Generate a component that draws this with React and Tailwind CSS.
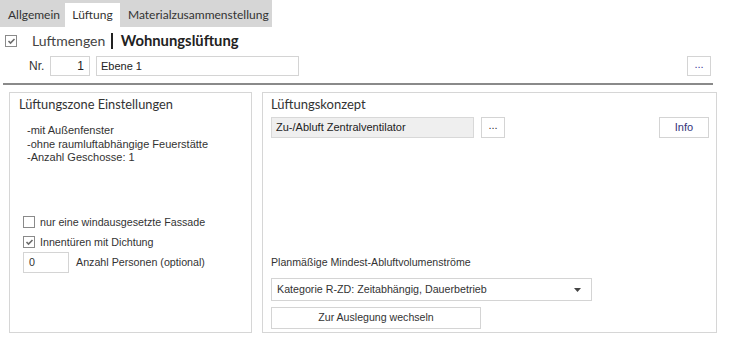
import React from "react";

const ui = { fontFamily: 'Lato, "Open Sans", sans-serif' };
const tah = { fontFamily: '"Liberation Sans", Arial, sans-serif' };

function Check({ checked }) {
  return (
    <span className="inline-flex h-[12px] w-[12px] shrink-0 items-center justify-center border border-[#8a8a8a] bg-white">
      {checked && (
        <svg width="9" height="8" viewBox="0 0 9 8">
          <path d="M1.5 4 L3.5 6 L7.5 2" fill="none" stroke="#6b6b6b" strokeWidth="1.6" />
        </svg>
      )}
    </span>
  );
}

export default function App() {
  return (
    <div className="relative h-[344px] w-[732px] overflow-hidden bg-white text-[#222]" style={ui}>
      {/* tabs */}
      <div className="flex h-[27px] w-[272px] items-end bg-[#d6d6d6] text-[12px] text-[#333]">
        <div className="flex h-[24px] w-[65px] items-center pl-[8px]">Allgemein</div>
        <div className="flex h-[24px] w-[55px] items-center justify-center bg-white">Lüftung</div>
        <div className="flex h-[24px] items-center pl-[8px]">Materialzusammenstellung</div>
      </div>

      {/* header */}
      <div className="flex h-[27px] items-center pl-[5px]">
        <Check checked />
        <span className="ml-[15px] text-[14px] text-[#444]">Luftmengen</span>
        <span className="ml-[6px] h-[16px] w-[1.5px] bg-[#222]" />
        <span className="ml-[8px] text-[14.8px] font-bold text-[#222]">Wohnungslüftung</span>
      </div>

      <div className="flex h-[24px] items-center text-[11px]" style={tah}>
        <span className="ml-[29px] w-[21px] text-[12px] text-[#333]">Nr.</span>
        <div className="flex h-[20px] w-[40px] items-center justify-end border border-[#d4d4d4] pr-[5px] text-[12px]">1</div>
        <div className="ml-[6px] flex h-[20px] w-[203px] items-center border border-[#d4d4d4] pl-[4px]">Ebene 1</div>
        <div className="ml-auto mr-[21px] flex h-[20px] w-[24px] items-center justify-center border border-[#d4d4d4] pb-[4px] text-[#3a3a9a]">...</div>
      </div>

      <div className="mx-[3px] mt-[5px] h-[2px] w-[710px] bg-[#8a8a8a]" />

      {/* panels */}
      <div className="mt-[7px] flex gap-[10px] pl-[9px]">
        <div className="flex h-[241px] w-[243px] flex-col border border-[#d6d6d6] pl-[9px]" style={tah}>
          <div className="mt-[2px] text-[12.8px] text-[#333]" style={ui}>Lüftungszone Einstellungen</div>
          <div className="mt-[10px] pl-[8px] text-[11px] leading-[13.5px] text-[#333]">
            <div>-mit Außenfenster</div>
            <div>-ohne raumluftabhängige Feuerstätte</div>
            <div>-Anzahl Geschosse: 1</div>
          </div>
          <div className="mt-[47px] flex flex-col pl-[4px] text-[10.7px] text-[#333]">
            <div className="flex h-[20px] items-center gap-[5px]">
              <Check />
              <span>nur eine windausgesetzte Fassade</span>
            </div>
            <div className="flex h-[20px] items-center gap-[5px]">
              <Check checked />
              <span>Innentüren mit Dichtung</span>
            </div>
            <div className="flex items-center">
              <div className="flex h-[21px] w-[46px] items-center border border-[#d4d4d4] pl-[5px]">0</div>
              <span className="ml-[7px]">Anzahl Personen (optional)</span>
            </div>
          </div>
        </div>

        <div className="flex h-[241px] w-[455px] flex-col border border-[#d6d6d6] pl-[8px]" style={tah}>
          <div className="mt-[2px] text-[13px] text-[#333]" style={ui}>Lüftungskonzept</div>
          <div className="mt-[2px] flex items-center text-[11px]">
            <div className="flex h-[21px] w-[203px] items-center border border-[#d8d8d8] bg-[#efefef] pl-[4px] text-[#222]">Zu-/Abluft Zentralventilator</div>
            <div className="ml-[7px] flex h-[21px] w-[24px] items-center justify-center border border-[#d4d4d4] pb-[4px] text-[#333]">...</div>
            <div className="ml-auto mr-[7px] flex h-[21px] w-[50px] items-center justify-center border border-[#d4d4d4] text-[#33337a]">Info</div>
          </div>
          <div className="mt-auto pb-[3px] text-[10.6px] text-[#333]">
            <div className="mb-[7px]">Planmäßige Mindest-Abluftvolumenströme</div>
            <div className="flex h-[23px] w-[321px] items-center border border-[#d4d4d4] pl-[5px] pr-[10px] text-[10.7px]">
              <span>Kategorie R-ZD: Zeitabhängig, Dauerbetrieb</span>
              <svg className="ml-auto" width="7" height="4" viewBox="0 0 7 4">
                <path d="M0 0 H7 L3.5 4 Z" fill="#444" />
              </svg>
            </div>
            <div className="mt-[6px] flex h-[22px] w-[210px] items-center justify-center border border-[#d4d4d4]">Zur Auslegung wechseln</div>
          </div>
        </div>
      </div>
    </div>
  );
}
